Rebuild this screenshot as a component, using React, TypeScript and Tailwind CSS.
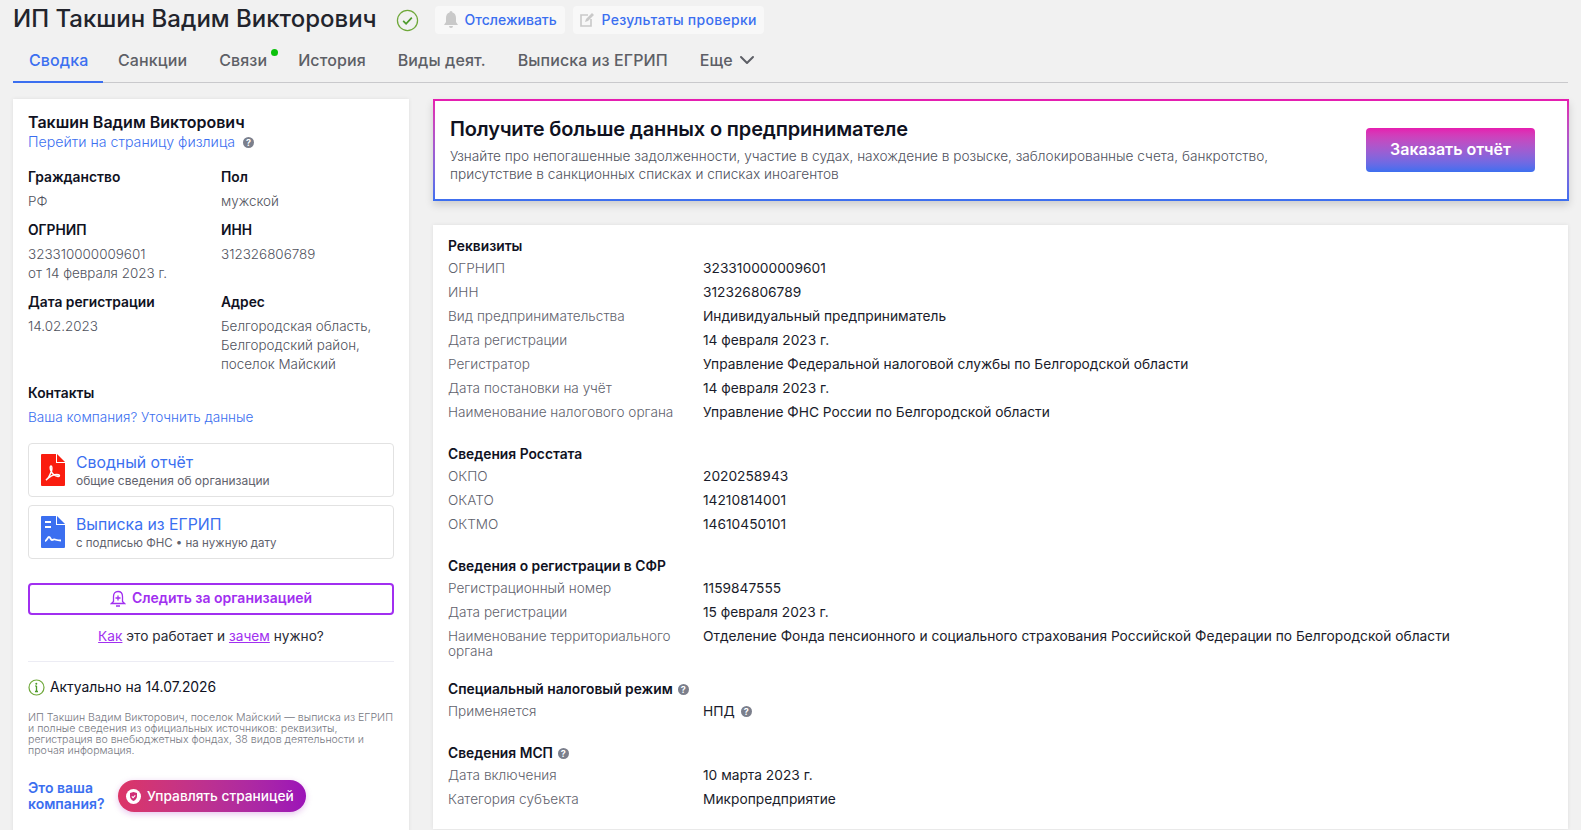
import React from 'react';
import { ChevronDown } from 'lucide-react';

const Help = ({ className = '' }: { className?: string }) => (
  <span className={`inline-flex w-[11px] h-[11px] rounded-full bg-[#7b7f8c] text-white text-[9px] font-bold leading-none items-center justify-center ${className}`}>?</span>
);

const Row = ({ label, children }: { label: string; children: React.ReactNode }) => (
  <div className="flex py-[4.5px] text-[13.75px] leading-[15px]">
    <div className="w-[255px] shrink-0 pr-5 text-[13.6px] font-light text-[#5f626d]">{label}</div>
    <div className="text-[#1a1c2b]">{children}</div>
  </div>
);

const SectionTitle = ({ children }: { children: React.ReactNode }) => (
  <div className="h-5 flex items-center gap-[5px] text-[13.8px] font-semibold text-[#10121f]">{children}</div>
);

const Field = ({ title, children }: { title: string; children: React.ReactNode }) => (
  <div>
    <div className="text-[13.8px] font-semibold leading-5 text-[#10121f]">{title}</div>
    <div className="mt-[5px] text-[13.45px] font-light leading-[19px] text-[#4f525d]">{children}</div>
  </div>
);

const PdfIcon = () => (
  <svg width="24" height="32" viewBox="0 0 24 32" className="shrink-0">
    <path d="M1 0h14v9h9v22a1 1 0 0 1-1 1H1a1 1 0 0 1-1-1V1a1 1 0 0 1 1-1z" fill="#fa1d0f" />
    <path d="M16 0l8 8h-8z" fill="#fa1d0f" />
    <path d="M5 26c2-1 4-5 5.500-9 .6-2 .6-5-.5-5s-1 3 0 5c1.500 3 4 5 7 5.500 1.500.2 2-1.500.5-1.800-3-.5-8 1-12.500 5.300z" fill="none" stroke="#fff" strokeWidth="1.500" />
  </svg>
);

const DocIcon = () => (
  <svg width="24" height="32" viewBox="0 0 24 32" className="shrink-0">
    <path d="M1 0h14v9h9v22a1 1 0 0 1-1 1H1a1 1 0 0 1-1-1V1a1 1 0 0 1 1-1z" fill="#3b6ff0" />
    <path d="M16 0l8 8h-8z" fill="#3b6ff0" />
    <path d="M4 5h6v2H4zM4 10h6v2H4z" fill="#fff" />
    <path d="M4 25c2 0 2.500-4 4-4s1.500 3 3 3 1.500-1 3-.5 2 1 6 1" fill="none" stroke="#fff" strokeWidth="1.800" />
  </svg>
);

export default function App() {
  return (
    <div className="h-[830px] overflow-hidden bg-[#f1f1f1] font-['Inter','Liberation_Sans',sans-serif] px-[13px]">
      {/* Header */}
      <div className="flex items-center h-[39px] pt-[1px]">
        <h1 className="-mt-[2px] text-2xl font-medium text-[#22242c] leading-none">ИП Такшин Вадим Викторович</h1>
        <svg width="23" height="23" viewBox="0 0 24 24" className="ml-[19px]" fill="none">
          <circle cx="12" cy="12" r="10.500" stroke="#6fa83a" strokeWidth="1.300" />
          <path d="M7.500 12.500l3 3 6-6.500" stroke="#4c9a2a" strokeWidth="1.800" />
        </svg>
        <button className="ml-[16px] h-[28px] w-[130px] justify-center bg-[#f8f8f8] rounded flex items-center gap-[6px] text-sm font-medium text-[#3b6ff0]">
          <svg width="16" height="18" viewBox="0 0 16 18" fill="#c9c9c9"><path d="M8 0a1.500 1.500 0 0 1 1.500 1.500C12 2.200 13 4.500 13 7v4l2 3H1l2-3V7c0-2.500 1-4.800 3.500-5.500A1.500 1.500 0 0 1 8 0zM6 15h4a2 2 0 0 1-4 0z" /></svg>
          Отслеживать
        </button>
        <button className="ml-[8px] h-[28px] w-[191px] justify-center bg-[#f8f8f8] rounded flex items-center gap-[6px] text-sm tracking-[0.3px] font-medium text-[#3b6ff0]">
          <svg width="16" height="16" viewBox="0 0 16 16" fill="none"><path d="M9 3H2v11h10V7" stroke="#c9c9c9" strokeWidth="1.600" /><path d="M6 10l1-3 6-6 2 2-6 6z" fill="#c9c9c9" /></svg>
          Результаты проверки
        </button>
      </div>

      {/* Tabs */}
      <div className="mt-[1px] h-[43px] flex items-start border-b border-[#c9c9cc] text-base tracking-[0.1px] font-medium text-[#5d5f66]">
        <div className="h-[43px] w-[90px] pl-4 pt-[8px] border-b-2 border-[#3b6ff0] text-[#3b6ff0]">Сводка</div>
        <div className="pt-[8px] ml-[15px]">Санкции</div>
        <div className="pt-[8px] ml-8 relative">
          Связи
          <span className="absolute -right-[11px] top-[9px] w-[7px] h-[7px] rounded-full bg-[#0bc10b]" />
        </div>
        <div className="pt-[8px] ml-[31px]">История</div>
        <div className="pt-[8px] ml-8">Виды деят.</div>
        <div className="pt-[8px] ml-8">Выписка из ЕГРИП</div>
        <div className="pt-[8px] ml-8 flex items-center gap-[2px]">Еще <ChevronDown size={24} strokeWidth={2} /></div>
      </div>

      <div className="mt-4 flex items-start gap-[24px]">
        {/* Left card */}
        <aside className="w-[396px] h-[740px] shrink-0 bg-white shadow-[0_0_4px_rgba(0,0,0,0.08)] px-[15px] pt-[13px]">
          <div className="text-base font-semibold leading-5 text-[#10121f]">Такшин Вадим Викторович</div>
          <div className="flex items-center gap-2 text-[14.2px] font-light leading-5 text-[#3b6ff0]">Перейти на страницу физлица <Help /></div>
          <div className="mt-[15px] grid grid-cols-[193px_1fr] gap-y-[9px]">
            <Field title="Гражданство">РФ</Field>
            <Field title="Пол">мужской</Field>
            <Field title="ОГРНИП">323310000009601<br />от 14 февраля 2023 г.</Field>
            <Field title="ИНН">312326806789</Field>
            <Field title="Дата регистрации">14.02.2023</Field>
            <Field title="Адрес">Белгородская область,<br />Белгородский район,<br />поселок Майский</Field>
          </div>
          <div className="mt-[9px] text-[13.8px] font-semibold leading-5 text-[#10121f]">Контакты</div>
          <div className="mt-[4px] text-[13.6px] font-light leading-5 text-[#3b6ff0]">Ваша компания? Уточнить данные</div>

          <div className="mt-[16px] h-[54px] border border-[#e2e2e2] rounded flex items-center gap-[11px] pl-[12px]">
            <PdfIcon />
            <div>
              <div className="text-[15.8px] leading-[21px] text-[#3b6ff0]">Сводный отчёт</div>
              <div className="text-xs leading-4 text-[#5f626d]">общие сведения об организации</div>
            </div>
          </div>
          <div className="mt-[8px] h-[54px] border border-[#e2e2e2] rounded flex items-center gap-[11px] pl-[12px]">
            <DocIcon />
            <div>
              <div className="text-[15.8px] leading-[21px] text-[#3b6ff0]">Выписка из ЕГРИП</div>
              <div className="text-[11.5px] leading-4 text-[#5f626d]">с подписью ФНС • на нужную дату</div>
            </div>
          </div>

          <button className="mt-[24px] w-full h-[32px] border-2 border-[#a12ff0] rounded flex items-center justify-center gap-[6px] text-sm leading-[18px] font-semibold text-[#a12ff0]">
            <svg width="16" height="18" viewBox="0 0 16 18" fill="none" stroke="#a12ff0" strokeWidth="1.300"><path d="M8 1.500c3 0 4.500 2 4.500 5v5l2 2h-13l2-2v-5c0-3 1.500-5 4.500-5zM6 16h4M8 5.500v5M5.500 8h5" /></svg>
            <span className="-mt-[2px]">Следить за организацией</span>
          </button>
          <div className="mt-[11px] text-center text-[13.7px] leading-5 text-[#2a2c36]">
            <span className="underline text-[#a12ff0]">Как</span> это работает и <span className="underline text-[#a12ff0]">зачем</span> нужно?
          </div>
          <div className="mt-[15px] border-t border-[#ececf4]" />
          <div className="mt-[15px] flex items-center gap-[5px] text-[13.9px] leading-5 text-[#10121f]">
            <svg width="17" height="17" viewBox="0 0 17 17" fill="none"><circle cx="8.500" cy="8.500" r="7.500" stroke="#6fa83a" strokeWidth="1.200" /><path d="M8.500 7v5M7 12.500h3M7.300 7h1.200" stroke="#4c9a2a" strokeWidth="1.300" /><circle cx="8.300" cy="4.700" r="1" fill="#4c9a2a" /></svg>
            Актуально на 14.07.2026
          </div>
          <p className="mt-[15px] text-[10.6px] font-light leading-[11px] text-[#777983]">ИП Такшин Вадим Викторович, поселок Майский — выписка из ЕГРИП и полные сведения из официальных источников: реквизиты, регистрация во внебюджетных фондах, 38 видов деятельности и прочая информация.</p>
          <div className="mt-[24px] flex items-center gap-[14px]">
            <div className="w-[76px] text-sm font-semibold leading-4 text-[#3b6ff0]">Это ваша компания?</div>
            <button className="h-[32px] w-[188px] rounded-full bg-gradient-to-r from-[#dc3566] to-[#9c12b8] shadow-[0_2px_6px_rgba(156,18,184,0.25)] flex items-center gap-[6px] pl-2 text-[13.7px] font-medium text-white">
              <svg width="15" height="15" viewBox="0 0 15 15"><circle cx="7.500" cy="7.500" r="7.500" fill="#fff" /><path d="M7.500 3l3.500 1v3c0 2.500-1.500 4-3.500 5C5.500 11 4 9.500 4 7V4z" fill="#d02f78" /><path d="M5.800 7.300l1.300 1.300 2.200-2.300" stroke="#fff" fill="none" strokeWidth="1.100" /></svg>
              Управлять страницей
            </button>
          </div>
        </aside>

        {/* Right column */}
        <main className="flex-1 min-w-0">
          <div className="h-[102px] -mr-[1px] bg-gradient-to-b from-[#e61ab0] to-[#3b6ff0] p-[2px] shadow-[0_4px_8px_rgba(0,0,0,0.15)]">
            <div className="h-full bg-white flex items-center justify-between pl-[15px] pr-[32px]">
              <div>
                <div className="text-xl tracking-[-0.15px] font-semibold leading-6 text-[#10121f]">Получите больше данных о предпринимателе</div>
                <div className="mt-[6px] text-[13.65px] font-light leading-[18px] text-[#4f525d]">Узнайте про непогашенные задолженности, участие в судах, нахождение в розыске, заблокированные счета, банкротство,<br />присутствие в санкционных списках и списках иноагентов</div>
              </div>
              <button className="h-[44px] w-[169px] pb-[2px] rounded bg-gradient-to-b from-[#e61ab0] to-[#3b6ff0] text-base font-semibold text-white">Заказать отчёт</button>
            </div>
          </div>

          <div className="mt-[24px] h-[604px] bg-white shadow-[0_0_4px_rgba(0,0,0,0.08)] px-[15px] pt-[11px]">
            <SectionTitle>Реквизиты</SectionTitle>
            <Row label="ОГРНИП">323310000009601</Row>
            <Row label="ИНН">312326806789</Row>
            <Row label="Вид предпринимательства">Индивидуальный предприниматель</Row>
            <Row label="Дата регистрации">14 февраля 2023 г.</Row>
            <Row label="Регистратор">Управление Федеральной налоговой службы по Белгородской области</Row>
            <Row label="Дата постановки на учёт">14 февраля 2023 г.</Row>
            <Row label="Наименование налогового органа">Управление ФНС России по Белгородской области</Row>

            <div className="mt-5"><SectionTitle>Сведения Росстата</SectionTitle></div>
            <Row label="ОКПО">2020258943</Row>
            <Row label="ОКАТО">14210814001</Row>
            <Row label="ОКТМО">14610450101</Row>

            <div className="mt-5"><SectionTitle>Сведения о регистрации в СФР</SectionTitle></div>
            <Row label="Регистрационный номер">1159847555</Row>
            <Row label="Дата регистрации">15 февраля 2023 г.</Row>
            <Row label="Наименование территориального органа">Отделение Фонда пенсионного и социального страхования Российской Федерации по Белгородской области</Row>

            <div className="mt-4"><SectionTitle>Специальный налоговый режим <Help /></SectionTitle></div>
            <Row label="Применяется"><span className="flex items-center gap-[6px]">НПД <Help /></span></Row>

            <div className="mt-5"><SectionTitle>Сведения МСП <Help /></SectionTitle></div>
            <Row label="Дата включения">10 марта 2023 г.</Row>
            <Row label="Категория субъекта">Микропредприятие</Row>
          </div>
        </main>
      </div>
    </div>
  );
}
